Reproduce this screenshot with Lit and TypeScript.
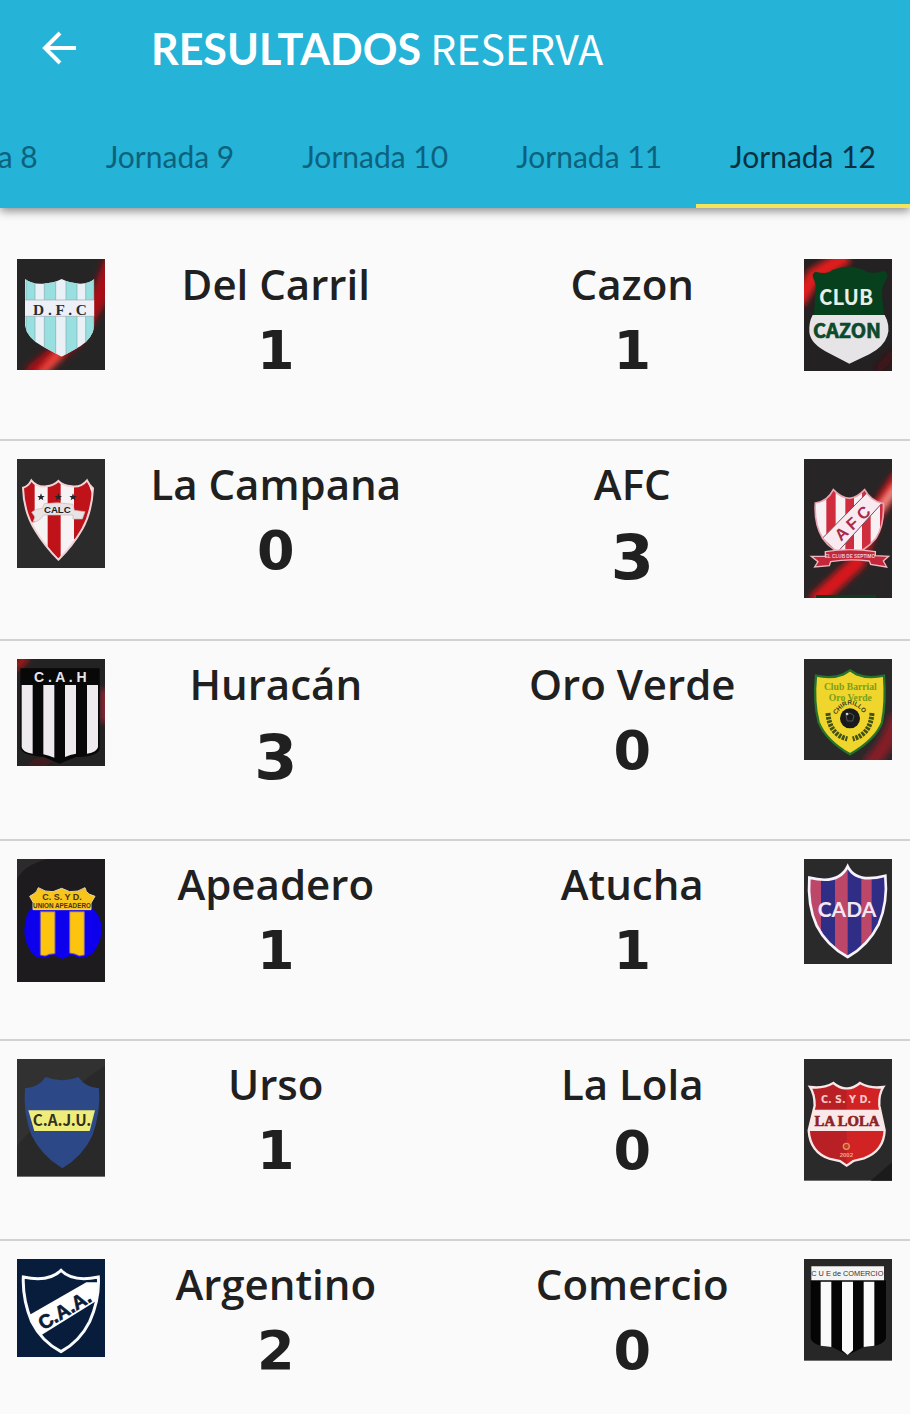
import { LitElement, html, svg, css, TemplateResult } from "lit";
import { customElement, property, state } from "lit/decorators.js";
import { classMap } from "lit/directives/class-map.js";

interface Crest {
  height: number;
  art: TemplateResult;
}

interface Side {
  name: string;
  score: number;
  crest: string;
}

const star = (x: number, y: number) =>
  svg`<path transform="translate(${x} ${y})" fill="#20262b" d="M0-11 3-3 11-3 5 2 7 10 0 5-7 10-5 2-11-3-3-3Z"/>`;

const CRESTS: Record<string, Crest> = {
  carril: {
    height: 334,
    art: svg`
      <rect width="264" height="334" fill="#262525"/>
      <g filter="url(#glow)">
        <path d="M40 350 170 240 250 110 290 0" fill="none" stroke="#a90f12" stroke-width="52"/>
        <path d="M70 350 130 280" stroke="#f5473f" stroke-width="22"/>
      </g>
      <clipPath id="c1"><path d="M24 60Q44 76 78 74 112 72 134 60 156 72 190 74 216 74 232 60V200Q228 236 190 262L134 293 76 262Q30 236 24 200Z"/></clipPath>
      <g clip-path="url(#c1)">
        <rect width="264" height="334" fill="#eaf1f6"/>
        <path d="M27 50h27v260H27zM82 50h34v260H82zM147 50h33v260h-33zM206 50h24v260h-24z" fill="#98dfe0" stroke="#86a9b2" stroke-width="2"/>
        <path d="M20 123h220v49H20z" fill="#edf0f6" stroke="#9ba9b4" stroke-width="2"/>
      </g>
      <text x="129" y="167" font-size="46" font-family="Liberation Serif, serif" font-weight="700" text-anchor="middle" fill="#2c2b30">D . F . C</text>`,
  },
  cazon: {
    height: 336,
    art: svg`
      <rect width="264" height="336" fill="#232122"/>
      <g filter="url(#glow)">
        <path d="M-20 130 30 50 130-10" fill="none" stroke="#e01d1b" stroke-width="46"/>
        <path d="M220 336 270 280" stroke="#4a1014" stroke-width="20"/>
      </g>
      <path d="M28 58Q22 44 34 38 70 48 84 34 136 12 180 34 200 48 238 36 256 42 248 60 232 80 234 110L240 170H30L34 100Q38 78 28 58Z" fill="#07401d"/>
      <path d="M26 168H242Q260 200 250 230 240 262 196 286L136 314 74 282Q20 256 16 220 14 190 26 168Z" fill="#e6e4e6"/>
      <g font-family="Noto Sans CJK SC, sans-serif" font-weight="700" text-anchor="middle">
        <text x="126" y="138" font-size="62" fill="#e8eee8">CLUB</text>
        <text x="129" y="236" font-size="60" fill="#0b4a2b" stroke="#0b4a2b" stroke-width="2">CAZON</text>
      </g>`,
  },
  campana: {
    height: 327,
    art: svg`
      <rect width="264" height="327" fill="#2b2b2c"/>
      <clipPath id="c3"><path d="M18 86Q34 82 43 64 60 86 88 82 110 80 124 66 138 80 164 82 192 86 210 64 218 80 228 88 224 160 196 210 166 262 124 302 84 262 56 216 20 160 18 86Z"/></clipPath>
      <g clip-path="url(#c3)">
        <rect width="264" height="327" fill="#f7f2f3"/>
        <path d="M16 60h37v130H16zM92 60h39v260H92zM171 60h39l20 60-20 120h-39z" fill="#c01219"/>
      </g>
      <path d="M18 86Q34 82 43 64 60 86 88 82 110 80 124 66 138 80 164 82 192 86 210 64 218 80 228 88 224 160 196 210 166 262 124 302 84 262 56 216 20 160 18 86Z" fill="none" stroke="#f1d4d7" stroke-width="6"/>
      <path d="M44 160Q58 148 76 148L82 134Q124 128 168 136L172 154 204 158 196 180 168 180V168H80Q66 190 48 188L54 174Z" fill="#e9e3e6" stroke="#c7b6ba" stroke-width="2"/>
      ${star(72, 114)}${star(124, 114)}${star(168, 114)}
      <text x="121" y="163" font-size="29" font-family="Liberation Sans, sans-serif" font-weight="700" text-anchor="middle" fill="#202326">CALC</text>`,
  },
  afc: {
    height: 417,
    art: svg`
      <rect width="264" height="417" fill="#272526"/>
      <g filter="url(#glow)">
        <path d="M30 430 160 310 210 170 290 50" fill="none" stroke="#d9161b" stroke-width="46"/>
        <path d="M225 155 280 80" stroke="#ffb2a8" stroke-width="12"/>
      </g>
      <path d="M36 408h180v9H36z" fill="#123c20"/>
      <clipPath id="c4"><path d="M34 132Q70 128 88 92 110 116 136 118 160 116 182 92 200 126 238 134 242 196 216 238 184 278 136 288 84 280 56 238 30 196 34 132Z"/></clipPath>
      <g clip-path="url(#c4)">
        <rect width="264" height="417" fill="#f9f0f3"/>
        <path d="M67 90h28v200H67zM124 90h26v200h-26zM174 90h26v200h-26zM228 90h20v200h-20z" fill="#cf2c3e"/>
        <path d="M55 238 198 92 258 106 100 280Z" fill="#f8eaf0" stroke="#77485b" stroke-width="3"/>
      </g>
      <path d="M34 132Q70 128 88 92 110 116 136 118 160 116 182 92 200 126 238 134 242 196 216 238 184 278 136 288 84 280 56 238 30 196 34 132Z" fill="none" stroke="#e9a4b1" stroke-width="5"/>
      <text transform="translate(157 205) rotate(-43)" font-size="49" font-family="Liberation Sans, sans-serif" font-weight="700" text-anchor="middle" fill="#a82b48">A F C</text>
      <path d="M22 292H64V278Q136 266 214 278V290L254 292 238 306 248 324 200 316 196 306Q136 298 80 308L76 320 32 324 42 308Z" fill="#c2283a" stroke="#f1b8c1" stroke-width="4"/>
      <text x="138" y="298" font-size="14" font-family="Liberation Sans, sans-serif" font-weight="700" text-anchor="middle" fill="#f6cbd2">EL CLUB DE SEPTIMO</text>`,
  },
  huracan: {
    height: 322,
    art: svg`
      <rect width="264" height="322" fill="#242323"/>
      <g filter="url(#glow)">
        <path d="M-10 30 30-10" stroke="#a81518" stroke-width="26"/>
        <path d="M264 90V190" stroke="#a02836" stroke-width="22"/>
        <path d="M40 320 100 300" stroke="#5a171c" stroke-width="16"/>
      </g>
      <path d="M10 28H248V270Q240 294 176 294L128 314 80 294Q16 290 10 268Z" fill="#080808"/>
      <path d="M14 78h33v206Q16 280 14 264ZM79 78h33v218Q96 290 79 286ZM144 78h33v206Q160 286 144 294ZM210 78h33v186Q240 280 210 284Z" fill="#eeeaee"/>
      <text x="130" y="70" font-size="42" font-family="Liberation Sans, sans-serif" font-weight="700" text-anchor="middle" fill="#e8e5e8">C . A . H</text>`,
  },
  oroverde: {
    height: 303,
    art: svg`
      <rect width="264" height="303" fill="#2a292a"/>
      <g filter="url(#glow)"><path d="M190 320Q250 270 280 170" fill="none" stroke="#861d26" stroke-width="44"/></g>
      <path d="M36 50Q84 60 118 46L138 34 158 46Q192 60 240 50 246 130 234 190 216 240 138 286 66 244 44 190 28 130 36 50Z" fill="#f0d62c" stroke="#25732c" stroke-width="7"/>
      <g font-family="Liberation Serif, serif" font-weight="700" text-anchor="middle" fill="#7b9e19">
        <text x="139" y="92" font-size="29">Club Barrial</text>
        <text x="139" y="125" font-size="29">Oro Verde</text>
      </g>
      <path id="arc" d="M96 168Q138 106 182 168" fill="none"/>
      <text font-size="19" font-family="Liberation Sans, sans-serif" font-weight="700" fill="#36451f"><textPath href="#arc">CHIRRILLO</textPath></text>
      <path d="M72 162Q76 226 130 240M204 162Q200 226 146 240" fill="none" stroke="#425217" stroke-width="15" stroke-dasharray="8 3"/>
      <circle cx="138" cy="178" r="30" fill="#191a1b"/>
      <path d="M126 170 138 162 150 170 146 186 130 186Z" fill="none" stroke="#555" stroke-width="3"/>
      <circle cx="129" cy="165" r="4" fill="#d0d0d0"/>`,
  },
  apeadero: {
    height: 369,
    art: svg`
      <rect width="264" height="369" fill="#1d1b1d"/>
      <path d="M0 0H90Q20 20 0 60Z" fill="#2d2a2c"/>
      <path d="M42 148H226Q254 170 254 214 252 256 224 286 194 306 166 288L136 300 108 288Q70 310 44 282 22 248 22 214 24 168 42 148Z" fill="#0d00ec"/>
      <path d="M70 158h44v126Q96 284 84 291L70 288ZM158 158h44v130L188 291Q174 284 158 282Z" fill="#fcc40c" stroke="#7e5da0" stroke-width="3"/>
      <path d="M38 112 48 106Q60 100 64 86 84 100 108 98L134 88 158 98Q184 100 204 86 206 100 218 106L234 112 222 132V152H48V130Z" fill="#f7c51b" stroke="#e5d4b0" stroke-width="3"/>
      <g font-family="Liberation Sans, sans-serif" font-weight="700" text-anchor="middle" fill="#4c3219">
        <text x="135" y="124" font-size="27">C. S. Y D.</text>
        <text x="135" y="147" font-size="19">UNION APEADERO</text>
      </g>`,
  },
  atucha: {
    height: 316,
    art: svg`
      <rect width="264" height="316" fill="#2a2a2a"/>
      <clipPath id="c8"><path d="M16 56Q104 78 131 22 156 74 244 50 252 130 224 196 192 260 131 294 68 260 38 200 10 140 16 56Z"/></clipPath>
      <g clip-path="url(#c8)">
        <rect width="264" height="316" fill="#302d86"/>
        <path d="M10 20h41v280H10zM93 20h38v280H93zM172 20h31v280h-31z" fill="#bd4768"/>
      </g>
      <path d="M16 56Q104 78 131 22 156 74 244 50 252 130 224 196 192 260 131 294 68 260 38 200 10 140 16 56Z" fill="none" stroke="#f7f2fb" stroke-width="8"/>
      <text x="129" y="173" font-size="63" font-family="Lato, sans-serif" font-weight="700" text-anchor="middle" fill="#f3e7f3">CADA</text>`,
  },
  urso: {
    height: 353,
    art: svg`
      <rect width="264" height="353" fill="#29292a"/>
      <path d="M0 0H264V20Q150 90 0 260Z" fill="#313132"/>
      <path d="M24 88Q64 86 86 54 136 74 184 54 206 86 246 88 252 160 226 230 198 290 136 328 72 290 42 226 18 160 24 88Z" fill="#2d4886"/>
      <path d="M34 154H234L218 216H52Z" fill="#eeed7c"/>
      <text x="135" y="200" font-size="46" font-family="Noto Sans CJK SC, sans-serif" font-weight="700" text-anchor="middle" fill="#34301e">C.A.J.U.</text>`,
  },
  lalola: {
    height: 365,
    art: svg`
      <rect width="264" height="365" fill="#292a29"/>
      <path d="M264 310V365H200Z" fill="#1b1b1b"/>
      <clipPath id="c10"><path d="M18 84Q56 90 88 72 110 90 128 88 146 90 168 72 200 90 238 84 224 106 226 140L242 214Q240 276 180 298L148 306 128 320 108 306 78 300Q18 280 14 214L32 140Q32 106 18 84Z"/></clipPath>
      <g clip-path="url(#c10)">
        <rect width="264" height="365" fill="#d12224"/>
        <path d="M0 60H128V330H0Z" fill="#b92026"/>
        <path d="M0 152H264V216H0Z" fill="#fae9e8"/>
      </g>
      <path d="M18 84Q56 90 88 72 110 90 128 88 146 90 168 72 200 90 238 84 224 106 226 140L242 214Q240 276 180 298L148 306 128 320 108 306 78 300Q18 280 14 214L32 140Q32 106 18 84Z" fill="none" stroke="#f8e8e8" stroke-width="7"/>
      <text x="126" y="131" font-size="29" font-family="DejaVu Sans, sans-serif" font-weight="700" text-anchor="middle" fill="#f4c9c9">C. S. Y D.</text>
      <text x="129" y="200" font-size="44" font-family="Liberation Serif, serif" font-weight="700" text-anchor="middle" fill="#8e2324" stroke="#8e2324" stroke-width="2">LA LOLA</text>
      <circle cx="127" cy="262" r="9" fill="#b84128" stroke="#e89258" stroke-width="4"/>
      <text x="127" y="295" font-size="18" font-family="Liberation Sans, sans-serif" font-weight="700" text-anchor="middle" fill="#f1a784">2002</text>`,
  },
  argentino: {
    height: 295,
    art: svg`
      <rect width="264" height="295" fill="#071d3b"/>
      <clipPath id="c11"><path d="M19 54Q96 70 132 34 166 70 244 54 248 120 218 188 188 248 132 278 74 248 44 188 16 120 19 54Z"/></clipPath>
      <path clip-path="url(#c11)" d="M20 178 208 70H264V110L70 230Z" fill="#fff"/>
      <path d="M19 54Q96 70 132 34 166 70 244 54 248 120 218 188 188 248 132 278 74 248 44 188 16 120 19 54Z" fill="none" stroke="#f9fbff" stroke-width="9"/>
      <text transform="translate(153 170) rotate(-31)" font-size="58" font-family="Liberation Sans, sans-serif" font-weight="700" text-anchor="middle" fill="#0b1c36" stroke="#0b1c36" stroke-width="2">C.A.A.</text>`,
  },
  comercio: {
    height: 305,
    art: svg`
      <rect width="264" height="305" fill="#272727"/>
      <path d="M20 64H246V238Q238 262 180 264L131 288 84 264Q26 262 20 238Z" fill="#050505"/>
      <path d="M50 68h32v196l-32-4ZM114 68h33v206l-16 14-17-14ZM179 68h32v192l-32 4Z" fill="#fafafa"/>
      <path d="M22 22H240V64H22Z" fill="#f4f4f4"/>
      <text x="130" y="50" font-size="22" font-family="Liberation Sans, sans-serif" text-anchor="middle" fill="#333">C U E de COMERCIO</text>`,
  },
};

const MATCHES: [Side, Side][] = [
  [{ name: "Del Carril", score: 1, crest: "carril" }, { name: "Cazon", score: 1, crest: "cazon" }],
  [{ name: "La Campana", score: 0, crest: "campana" }, { name: "AFC", score: 3, crest: "afc" }],
  [{ name: "Huracán", score: 3, crest: "huracan" }, { name: "Oro Verde", score: 0, crest: "oroverde" }],
  [{ name: "Apeadero", score: 1, crest: "apeadero" }, { name: "Atucha", score: 1, crest: "atucha" }],
  [{ name: "Urso", score: 1, crest: "urso" }, { name: "La Lola", score: 0, crest: "lalola" }],
  [{ name: "Argentino", score: 2, crest: "argentino" }, { name: "Comercio", score: 0, crest: "comercio" }],
];

@customElement("team-crest")
export class TeamCrest extends LitElement {
  @property() team = "";
  @property() label = "";

  static styles = css`
    :host { display: block; }
    svg { display: block; width: 100%; height: auto; overflow: hidden; }
  `;

  render() {
    const crest = CRESTS[this.team];
    return html`<svg viewBox="0 0 264 ${crest.height}" role="img" aria-label=${this.label}>
      <defs><filter id="glow" x="-50%" y="-50%" width="200%" height="200%"><feGaussianBlur stdDeviation="10" /></filter></defs>
      ${crest.art}
    </svg>`;
  }
}

@customElement("match-row")
export class MatchRow extends LitElement {
  @property({ attribute: false }) home!: Side;
  @property({ attribute: false }) away!: Side;

  static styles = css`
    :host { display: block; }
    .row {
      box-sizing: border-box;
      display: grid;
      grid-template-columns: 88px 1fr 1fr 88px;
      align-items: start;
      min-height: 200px;
      padding: 18px 18px 18px 17px;
      border-bottom: 2px solid #d2d2d2;
    }
    .side { display: flex; flex-direction: column; align-items: center; color: #202020; }
    .home { padding-right: 8px; }
    .away { padding-left: 6px; }
    .name { margin: 0; font: 600 42px/50px "Open Sans", sans-serif; white-space: nowrap; }
    .score { font: 700 54px/84px "DejaVu Sans", sans-serif; }
    .old-style { font-size: 62px; line-height: 98px; }
  `;

  private side(team: Side, place: "home" | "away") {
    return html`<div class="side ${place}">
      <h2 class="name">${team.name}</h2>
      <span class=${classMap({ score: true, "old-style": team.score > 2 })}>${team.score}</span>
    </div>`;
  }

  render() {
    return html`<article class="row">
      <team-crest team=${this.home.crest} label=${this.home.name}></team-crest>
      ${this.side(this.home, "home")} ${this.side(this.away, "away")}
      <team-crest team=${this.away.crest} label=${this.away.name}></team-crest>
    </article>`;
  }
}

@customElement("app-root")
export class AppRoot extends LitElement {
  @state() private round = 12;

  static styles = css`
    :host {
      display: flex;
      flex-direction: column;
      height: 100vh;
      overflow: hidden;
      background: #fafafa;
    }
    .header { z-index: 1; flex: none; background: #25b3d7; box-shadow: 0 3px 9px rgba(0, 0, 0, 0.45); }
    .bar { display: flex; align-items: center; height: 96px; padding: 0 36px; gap: 69px; }
    .back { display: flex; padding: 0; border: 0; background: none; }
    .title { margin: 0; color: #fff; font: 400 41px/60px "Noto Sans CJK SC", sans-serif; white-space: nowrap; }
    .title strong { font: 700 43px/60px Lato, sans-serif; }
    .tabs { display: flex; justify-content: flex-end; overflow: hidden; }
    .tab {
      flex: none;
      height: 112px;
      padding: 12px 34px 0;
      border: 0;
      border-bottom: 4px solid transparent;
      background: none;
      color: #0c627c;
      font: 400 30px/36px Lato, sans-serif;
      white-space: nowrap;
    }
    .active { border-bottom-color: #f3e45c; color: #0a3142; }
    .list { flex: 1; min-height: 0; padding-top: 33px; overflow-y: auto; scrollbar-width: none; }
  `;

  render() {
    return html`
      <header class="header">
        <div class="bar">
          <button class="back" aria-label="Volver">
            <svg width="46" height="46" viewBox="0 0 46 46" fill="none" stroke="#fff" stroke-width="4">
              <path d="M40 23H9M24 8 9 23l15 15" />
            </svg>
          </button>
          <h1 class="title"><strong>RESULTADOS</strong> RESERVA</h1>
        </div>
        <nav class="tabs" role="tablist">
          ${[8, 9, 10, 11, 12].map(
            (n) => html`<button
              role="tab"
              aria-selected=${n === this.round}
              class=${classMap({ tab: true, active: n === this.round })}
              @click=${() => (this.round = n)}
            >Jornada ${n}</button>`
          )}
        </nav>
      </header>
      <main class="list">
        ${MATCHES.map(([home, away]) => html`<match-row .home=${home} .away=${away}></match-row>`)}
      </main>
    `;
  }
}
